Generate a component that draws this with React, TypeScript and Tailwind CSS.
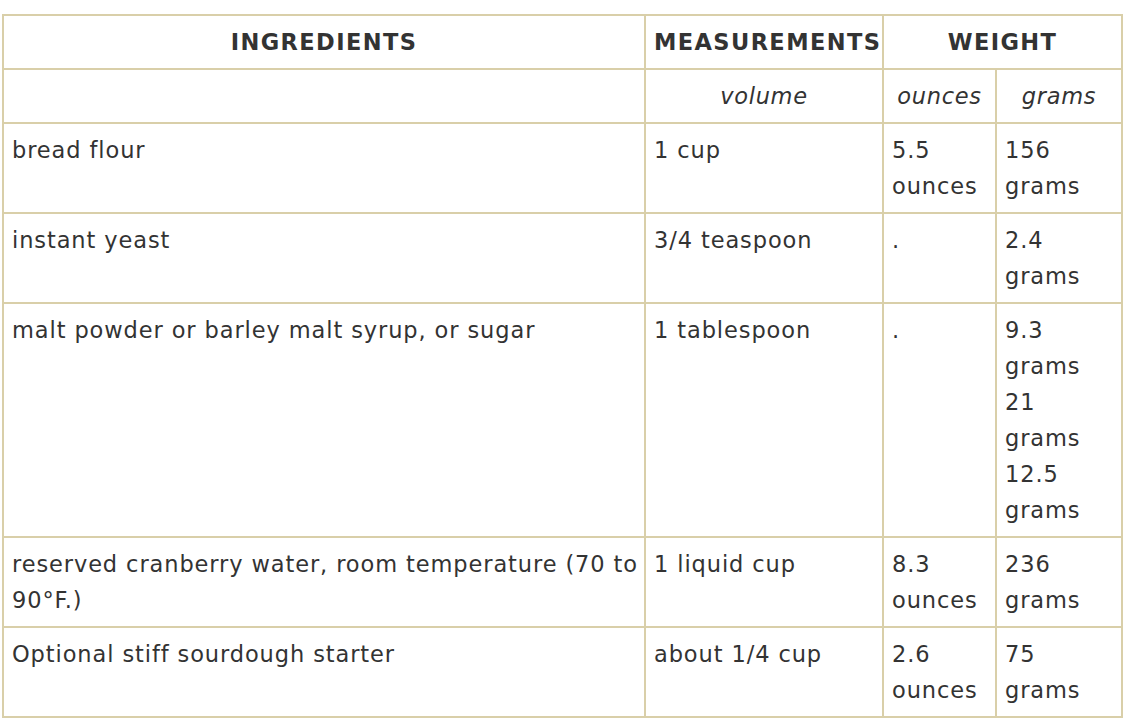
const rows: { name: string[]; measure: string; ounces: string[]; grams: string[] }[] = [
  { name: ["bread flour"], measure: "1 cup", ounces: ["5.5", "ounces"], grams: ["156", "grams"] },
  { name: ["instant yeast"], measure: "3/4 teaspoon", ounces: ["."], grams: ["2.4", "grams"] },
  {
    name: ["malt powder or barley malt syrup, or sugar"],
    measure: "1 tablespoon",
    ounces: ["."],
    grams: ["9.3", "grams", "21", "grams", "12.5", "grams"],
  },
  {
    name: ["reserved cranberry water, room temperature (70 to", "90°F.)"],
    measure: "1 liquid cup",
    ounces: ["8.3", "ounces"],
    grams: ["236", "grams"],
  },
  { name: ["Optional stiff sourdough starter"], measure: "about 1/4 cup", ounces: ["2.6", "ounces"], grams: ["75", "grams"] },
];

function Lines({ items }: { items: string[] }) {
  return (
    <>
      {items.map((t, i) => (
        <span key={i} className="block whitespace-nowrap">
          {t}
        </span>
      ))}
    </>
  );
}

const cell = "border-2 border-[#d9cfa9] px-[8px] py-[8px] align-top tracking-[0.9px]";
const sub = "border-2 border-[#d9cfa9] px-[8px] py-[8px] text-center italic tracking-[0.7px]";
const head = "border-2 border-[#d9cfa9] px-[8px] py-[8px] text-center font-bold tracking-[1.4px]";

export default function App() {
  return (
    <div className="bg-white min-h-screen pt-[14px] pl-[2px] text-[#333] text-[22.5px] leading-[36px] font-['Verdana','DejaVu_Sans',sans-serif]">
      <table className="w-[1119px] table-fixed border-collapse">
        <colgroup>
          <col className="w-[642px]" />
          <col className="w-[238px]" />
          <col className="w-[113px]" />
          <col className="w-[126px]" />
        </colgroup>
        <thead>
          <tr>
            <th className={head}>INGREDIENTS</th>
            <th className={`${head} whitespace-nowrap`}>MEASUREMENTS</th>
            <th className={head} colSpan={2}>
              WEIGHT
            </th>
          </tr>
          <tr>
            <td className={sub}></td>
            <td className={sub}>volume</td>
            <td className={sub}>ounces</td>
            <td className={sub}>grams</td>
          </tr>
        </thead>
        <tbody>
          {rows.map((r) => (
            <tr key={r.measure}>
              <td className={cell}>
                <Lines items={r.name} />
              </td>
              <td className={cell}>{r.measure}</td>
              <td className={cell}>
                <Lines items={r.ounces} />
              </td>
              <td className={cell}>
                <Lines items={r.grams} />
              </td>
            </tr>
          ))}
        </tbody>
      </table>
    </div>
  );
}
